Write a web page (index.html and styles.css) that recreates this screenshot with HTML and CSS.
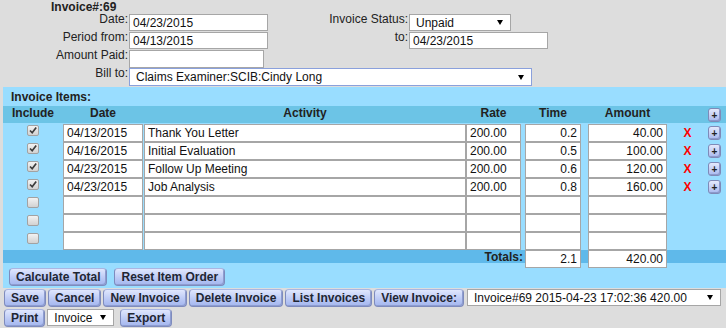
FILE: index.html
```html
<!DOCTYPE html>
<html lang="en">
<head>
<meta charset="utf-8">
<title>Invoice #69</title>
<link rel="stylesheet" href="styles.css">
</head>
<body>
<div class="invno">Invoice#:69</div>
<div class="form">
  <label class="lbl">Date:</label>
  <div class="fld"><input class="txt w139" type="text" value="04/23/2015"></div>
  <label class="lbl">Invoice Status:</label>
  <div class="fld"><div class="sel status"><span>Unpaid</span><svg class="arr" width="6" height="5" viewBox="0 0 6 5"><path d="M0 0H6L3 5Z"/></svg></div></div>

  <label class="lbl">Period from:</label>
  <div class="fld"><input class="txt w139" type="text" value="04/13/2015"></div>
  <label class="lbl">to:</label>
  <div class="fld"><input class="txt w139" type="text" value="04/23/2015"></div>

  <label class="lbl">Amount Paid:</label>
  <div class="fld"><input class="txt paid" type="text" value=""></div>
  <div></div><div></div>

  <label class="lbl">Bill to:</label>
  <div class="fld span3"><div class="sel billto"><span>Claims Examiner:SCIB:Cindy Long</span><svg class="arr" width="6" height="5" viewBox="0 0 6 5"><path d="M0 0H6L3 5Z"/></svg></div></div>
</div>

<div class="items">
  <div class="items-title">Invoice Items:</div>
  <div class="row hdr">
    <div class="c-inc">Include</div>
    <div class="c-date">Date</div>
    <div class="c-act">Activity</div>
    <div class="c-rate">Rate</div>
    <div class="c-time">Time</div>
    <div class="c-amt">Amount</div>
    <div class="c-x"></div>
    <div class="c-plus"><button class="plus">+</button></div>
  </div>

  <div class="row">
    <div class="c-inc"><span class="chk on"><svg width="12" height="11" viewBox="0 0 12 11"><path d="M3 5.5L5.2 7.8L9.2 2.6"/></svg></span></div>
    <input class="txt c-date" value="04/13/2015">
    <input class="txt c-act" value="Thank You Letter">
    <input class="txt c-rate" value="200.00">
    <input class="txt c-time num" value="0.2">
    <input class="txt c-amt num" value="40.00">
    <div class="c-x">X</div>
    <div class="c-plus"><button class="plus">+</button></div>
  </div>
  <div class="row">
    <div class="c-inc"><span class="chk on"><svg width="12" height="11" viewBox="0 0 12 11"><path d="M3 5.5L5.2 7.8L9.2 2.6"/></svg></span></div>
    <input class="txt c-date" value="04/16/2015">
    <input class="txt c-act" value="Initial Evaluation">
    <input class="txt c-rate" value="200.00">
    <input class="txt c-time num" value="0.5">
    <input class="txt c-amt num" value="100.00">
    <div class="c-x">X</div>
    <div class="c-plus"><button class="plus">+</button></div>
  </div>
  <div class="row">
    <div class="c-inc"><span class="chk on"><svg width="12" height="11" viewBox="0 0 12 11"><path d="M3 5.5L5.2 7.8L9.2 2.6"/></svg></span></div>
    <input class="txt c-date" value="04/23/2015">
    <input class="txt c-act" value="Follow Up Meeting">
    <input class="txt c-rate" value="200.00">
    <input class="txt c-time num" value="0.6">
    <input class="txt c-amt num" value="120.00">
    <div class="c-x">X</div>
    <div class="c-plus"><button class="plus">+</button></div>
  </div>
  <div class="row">
    <div class="c-inc"><span class="chk on"><svg width="12" height="11" viewBox="0 0 12 11"><path d="M3 5.5L5.2 7.8L9.2 2.6"/></svg></span></div>
    <input class="txt c-date" value="04/23/2015">
    <input class="txt c-act" value="Job Analysis">
    <input class="txt c-rate" value="200.00">
    <input class="txt c-time num" value="0.8">
    <input class="txt c-amt num" value="160.00">
    <div class="c-x">X</div>
    <div class="c-plus"><button class="plus">+</button></div>
  </div>
  <div class="row">
    <div class="c-inc"><span class="chk"></span></div>
    <input class="txt c-date" value="">
    <input class="txt c-act" value="">
    <input class="txt c-rate" value="">
    <input class="txt c-time num" value="">
    <input class="txt c-amt num" value="">
  </div>
  <div class="row">
    <div class="c-inc"><span class="chk"></span></div>
    <input class="txt c-date" value="">
    <input class="txt c-act" value="">
    <input class="txt c-rate" value="">
    <input class="txt c-time num" value="">
    <input class="txt c-amt num" value="">
  </div>
  <div class="row">
    <div class="c-inc"><span class="chk"></span></div>
    <input class="txt c-date" value="">
    <input class="txt c-act" value="">
    <input class="txt c-rate" value="">
    <input class="txt c-time num" value="">
    <input class="txt c-amt num" value="">
  </div>

  <div class="row totals">
    <div class="tot-lbl">Totals:</div>
    <input class="txt c-time num" value="2.1">
    <input class="txt c-amt num" value="420.00">
  </div>

  <div class="calc-bar">
    <button class="btn">Calculate Total</button>
    <button class="btn">Reset Item Order</button>
  </div>
</div>

<div class="actions">
  <button class="btn">Save</button>
  <button class="btn">Cancel</button>
  <button class="btn">New Invoice</button>
  <button class="btn">Delete Invoice</button>
  <button class="btn">List Invoices</button>
  <button class="btn">View Invoice:</button>
  <div class="sel view"><span>Invoice#69 2015-04-23 17:02:36 420.00</span><svg class="arr" width="6" height="5" viewBox="0 0 6 5"><path d="M0 0H6L3 5Z"/></svg></div>
</div>
<div class="actions second">
  <button class="btn">Print</button>
  <div class="sel print-type"><span>Invoice</span><svg class="arr" width="6" height="5" viewBox="0 0 6 5"><path d="M0 0H6L3 5Z"/></svg></div>
  <button class="btn">Export</button>
</div>
</body>
</html>
```

FILE: styles.css
```css
* {
  box-sizing: border-box;
}

html,
body {
  margin: 0;
  padding: 0;
}

body {
  width: 726px;
  height: 328px;
  overflow: hidden;
  background: #dddddd;
  color: #222222;
  font: 12px/14px "Liberation Sans", Arial, sans-serif;
}

.invno {
  height: 14px;
  padding-left: 51px;
  font-weight: bold;
}

/* header form */
.form {
  display: grid;
  grid-template-columns: 129px 140px 140px 1fr;
  grid-auto-rows: 18px;
}

.lbl {
  margin-top: -2px;
  padding-right: 1px;
  text-align: right;
}

.fld {
  display: flex;
  align-items: flex-start;
}

.span3 {
  grid-column: span 3;
}

.txt {
  display: block;
  height: 18px;
  margin: 0;
  padding: 0 3px;
  border: 1px solid #a6a6a6;
  background: #ffffff;
  color: #111111;
  font: 12px/14px "Liberation Sans", Arial, sans-serif;
  outline: none;
}

.w139 {
  width: 139px;
  height: 17px;
}

.paid {
  width: 135px;
}

.sel {
  display: flex;
  align-items: center;
  justify-content: space-between;
  height: 17px;
  padding: 0 7px 0 6px;
  border: 1px solid #a6a6a6;
  background: #ffffff;
  color: #111111;
  white-space: nowrap;
}

.arr {
  flex: none;
  fill: #000000;
}

.status {
  width: 102px;
}

.billto {
  width: 403px;
  height: 18px;
  border-color: #8aa0dc;
}

/* items section */
.items {
  margin: 1px 0 0 3px;
  background: #99ddff;
}

.items-title {
  height: 19px;
  padding: 3px 0 2px 8px;
  font-weight: bold;
}

.row {
  display: flex;
  height: 18px;
}

.hdr {
  height: 17px;
  margin-bottom: 1px;
  background: #6cc4e6;
  font-weight: bold;
  text-align: center;
}

.c-inc {
  flex: none;
  width: 60px;
  display: flex;
  justify-content: center;
}

.c-date {
  flex: none;
  width: 80px;
}

.c-act {
  flex: none;
  width: 322px;
  margin-left: 1px;
}

.c-rate {
  flex: none;
  width: 55px;
}

.c-time {
  flex: none;
  width: 56px;
  margin-left: 4px;
}

.c-amt {
  flex: none;
  width: 79px;
  margin-left: 7px;
}

.c-x {
  flex: none;
  width: 41px;
  padding-top: 2px;
  color: #ff0000;
  font-weight: bold;
  text-align: center;
}

.c-plus {
  flex: none;
  width: 18px;
}

.num {
  text-align: right;
}

.chk {
  display: block;
  width: 12px;
  height: 11px;
  margin-top: 1px;
  border: 1px solid #a2a2a2;
  border-radius: 2px;
  background: linear-gradient(#f2f2f2, #d2d2d2);
}

.chk svg {
  display: block;
  margin: -1px 0 0 -1px;
  fill: none;
  stroke: #3c3c3c;
  stroke-width: 1.7;
}

.plus {
  display: block;
  width: 13px;
  height: 14px;
  margin-top: 2px;
  padding: 0;
  border: 1px solid #7f8ab8;
  border-radius: 3px;
  background: linear-gradient(#e4e9fc, #a9b9ef);
  box-shadow: inset -1px -1px 0 #8c99cc;
  color: #222222;
  font: bold 10px/11px "Liberation Sans", Arial, sans-serif;
}

.totals {
  height: 13px;
  background: #5fb9ea;
  overflow: visible;
}

.tot-lbl {
  flex: none;
  width: 522px;
  padding-right: 2px;
  text-align: right;
  font-weight: bold;
}

.totals .c-time {
  margin-left: 0;
}

.calc-bar {
  display: flex;
  gap: 7px;
  padding: 5px 0 2px 6px;
}

/* buttons */
.btn {
  flex: none;
  height: 18px;
  margin: 0;
  padding: 0 6px;
  border: 1px solid #7e8bbd;
  border-top-color: #a9b5e2;
  border-radius: 4px;
  background: linear-gradient(#e0e7fd, #bccaf5 55%, #a3b6ef);
  box-shadow: inset -1px -1px 0 #8e9dd0;
  color: #1f2633;
  font: bold 12px/14px "Liberation Sans", Arial, sans-serif;
  white-space: nowrap;
}

.actions {
  display: flex;
  align-items: flex-start;
  gap: 2px;
  margin-top: 1px;
  padding-left: 4px;
}

.actions.second {
  margin-top: 2px;
}

.view {
  width: 254px;
  margin-left: 1px;
}

.print-type {
  width: 67px;
  margin-right: 4px;
}
```
